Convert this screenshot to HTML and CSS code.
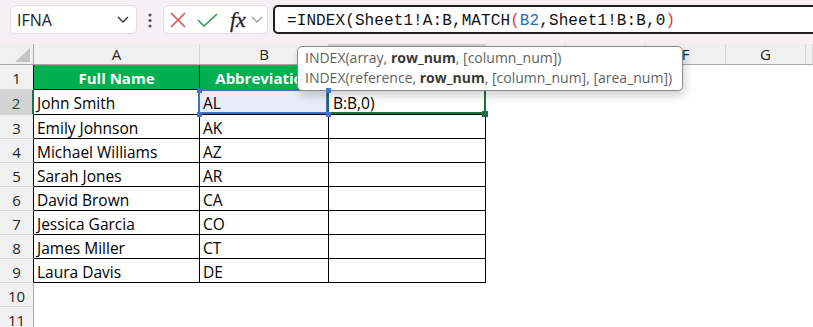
FILE: index.html
```html
<!DOCTYPE html>
<html>
<head>
  <link rel="stylesheet" href="styles.css">
</head>
<body>
  <div class="toolbar">
    <div class="namebox">
      <span>IFNA</span>
      <svg width="12" height="7" viewBox="0 0 12 7"><polyline points="1,1 6,6 11,1" fill="none" stroke="#333" stroke-width="1.4"/></svg>
    </div>
    <div class="dots">
      <svg width="4" height="15" viewBox="0 0 4 15"><circle cx="2" cy="2" r="1.6" fill="#555"/><circle cx="2" cy="7.5" r="1.6" fill="#555"/><circle cx="2" cy="13" r="1.6" fill="#555"/></svg>
    </div>
    <div class="fxbox">
      <svg class="cancel" width="16" height="16" viewBox="0 0 16 16"><path d="M1 1 L15 15 M15 1 L1 15" stroke="#e5484d" stroke-width="1.5" fill="none"/></svg>
      <svg class="enter" width="21" height="14" viewBox="0 0 21 14"><polyline points="1,7 7,13 20,1" fill="none" stroke="#2f9e4f" stroke-width="1.6"/></svg>
      <span class="fx">fx</span>
      <svg class="more" width="12" height="7" viewBox="0 0 12 7"><polyline points="1,1 6,6 11,1" fill="none" stroke="#a0a0a0" stroke-width="1.3"/></svg>
    </div>
    <div class="formula">
      <span>=INDEX(Sheet1!A:B,MATCH</span><span class="paren">(</span><span class="ref-text">B2</span><span>,Sheet1!B:B,0</span><span class="paren">)</span>
    </div>
  </div>

  <div class="sheet">
    <div class="corner"><svg width="33" height="20" viewBox="0 0 33 20"><polygon points="30,4 30,18 15,18" fill="#c4c4c4"/></svg></div>
    <div class="ch">A</div>
    <div class="ch">B</div>
    <div class="ch sel">C</div>
    <div class="ch">D</div>
    <div class="ch">E</div>
    <div class="ch">F</div>
    <div class="ch">G</div>
    <div class="ch"></div>

    <div class="rh tb">1</div><div class="t hd">Full Name</div><div class="t hd">Abbreviation</div><div class="t"></div>
    <div class="rh tb sel">2</div><div class="t">John Smith</div>
    <div class="t ref">AL<span class="h h1"></span><span class="h h2"></span><span class="h h3"></span><span class="h h4"></span></div>
    <div class="t act">B:B,0)<span class="h g1"></span></div>
    <div class="rh tb">3</div><div class="t">Emily Johnson</div><div class="t">AK</div><div class="t"></div>
    <div class="rh tb">4</div><div class="t">Michael Williams</div><div class="t">AZ</div><div class="t"></div>
    <div class="rh tb">5</div><div class="t">Sarah Jones</div><div class="t">AR</div><div class="t"></div>
    <div class="rh tb">6</div><div class="t">David Brown</div><div class="t">CA</div><div class="t"></div>
    <div class="rh tb">7</div><div class="t">Jessica Garcia</div><div class="t">CO</div><div class="t"></div>
    <div class="rh tb">8</div><div class="t">James Miller</div><div class="t">CT</div><div class="t"></div>
    <div class="rh tb">9</div><div class="t">Laura Davis</div><div class="t">DE</div><div class="t"></div>
    <div class="rh">10</div>
    <div class="rh">11</div>
  </div>

  <div class="tip">
    <div>INDEX(array, <b>row_num</b>, [column_num])</div>
    <div>INDEX(reference, <b>row_num</b>, [column_num], [area_num])</div>
  </div>
</body>
</html>
```

FILE: styles.css
```css
body {
  margin: 0;
  width: 813px;
  height: 327px;
  overflow: hidden;
  position: relative;
  background: #fff;
  font-family: 'Open Sans', sans-serif;
}

.toolbar {
  display: flex;
  align-items: flex-start;
  height: 44px;
  box-sizing: border-box;
  padding: 5px 0 0 10px;
  background: #f4f0f3;
}

.namebox {
  width: 127px;
  height: 29px;
  box-sizing: border-box;
  background: #fff;
  border: 1px solid #e2dee1;
  border-radius: 5px;
  display: flex;
  align-items: center;
  justify-content: space-between;
  padding: 0 7px 0 6px;
  font-size: 16px;
  color: #222;
}

.dots {
  width: 26px;
  display: flex;
  justify-content: center;
  padding-top: 8px;
}

.fxbox {
  width: 105px;
  height: 29px;
  box-sizing: border-box;
  background: #fff;
  border: 1px solid #e2dee1;
  border-radius: 5px;
  display: flex;
  align-items: center;
  padding-left: 6px;
}

.enter {
  margin-left: 11px;
}

.fx {
  margin-left: 12px;
  font-family: 'Liberation Serif', serif;
  font-style: italic;
  font-size: 22px;
  color: #222;
  line-height: 20px;
  -webkit-text-stroke: 0.3px #222;
}

.more {
  margin-left: 5px;
}

.formula {
  flex: 1;
  height: 29px;
  box-sizing: border-box;
  margin: 0 -12px 0 5px;
  border: 2px solid #1f1f1f;
  border-radius: 5px;
  background: #fff;
  display: flex;
  align-items: center;
  padding: 2px 0 0 12px;
  font-family: 'Liberation Mono', monospace;
  font-size: 16px;
  letter-spacing: 0.1px;
  color: #111;
  white-space: nowrap;
}

.paren {
  color: #e0383e;
}

.ref-text {
  color: #1f6fc5;
}

.sheet {
  display: grid;
  grid-template-columns: 34px 166px 129px 157px 80px 80px 80px 80px 1fr;
  grid-template-rows: 21px 25px 25px repeat(7, 24px) 24px 24px;
  font-size: 15.5px;
}

.sheet > div {
  box-sizing: border-box;
}

.corner {
  background: #f0f0f0;
  border-right: 1px solid #a8a8a8;
  border-bottom: 1px solid #a8a8a8;
}

.corner svg {
  display: block;
}

.ch {
  background: #f0f0f0;
  border-right: 1px solid #d6d6d6;
  border-bottom: 1px solid #a8a8a8;
  text-align: center;
  line-height: 21px;
  font-size: 15px;
  color: #262626;
}

.ch.sel {
  background: #d3d3d3;
  border-bottom: 2px solid #1e6f42;
  color: #1e6f42;
}

.rh {
  grid-column: 1;
  background: #f0f0f0;
  border-right: 1px solid #a8a8a8;
  border-bottom: 1px solid #d6d6d6;
  display: flex;
  align-items: center;
  justify-content: center;
  padding-top: 2px;
  font-size: 15px;
  color: #262626;
}

.rh.tb {
  border-right-color: #000;
}

.rh.sel {
  background: #d3d3d3;
  border-right: 2px solid #1e6f42;
  color: #16502f;
}

.t {
  border-right: 1px solid #000;
  border-bottom: 1px solid #000;
  display: flex;
  align-items: center;
  padding: 2px 0 0 3px;
  color: #000;
  white-space: nowrap;
}

.hd {
  background: #00b050;
  color: #fff;
  font-weight: bold;
  font-size: 15px;
  justify-content: center;
  padding-left: 0;
  overflow: hidden;
}

.ref {
  position: relative;
  background: #e9edf8;
}

.ref::after {
  content: '';
  position: absolute;
  left: -2px;
  top: -1px;
  right: 0;
  bottom: 0;
  border: 2px solid #4472c4;
}

.act {
  position: relative;
  padding-left: 4px;
}

.act::after {
  content: '';
  position: absolute;
  left: -2px;
  top: -1px;
  right: -1px;
  bottom: 0;
  border: 2px solid #1e6f42;
}

.h {
  position: absolute;
  width: 5px;
  height: 5px;
  background: #4472c4;
  z-index: 2;
}

.h1 { left: -3px; top: -2px; }
.h2 { left: 126px; top: -2px; }
.h3 { left: -3px; top: 22px; }
.h4 { left: 126px; top: 22px; }

.g1 {
  left: 153px;
  top: 21px;
  width: 6px;
  height: 6px;
  background: #1e6f42;
}

.tip {
  position: absolute;
  left: 297px;
  top: 46px;
  width: 386px;
  height: 45px;
  box-sizing: border-box;
  background: #fff;
  border: 1px solid #8a8a8a;
  border-radius: 5px;
  box-shadow: 2px 5px 10px rgba(0, 0, 0, 0.18);
  padding: 1px 7px 0;
  font-size: 14px;
  line-height: 20px;
  color: #5f5f5f;
  white-space: nowrap;
}

.tip b {
  color: #3a3a3a;
}
```
